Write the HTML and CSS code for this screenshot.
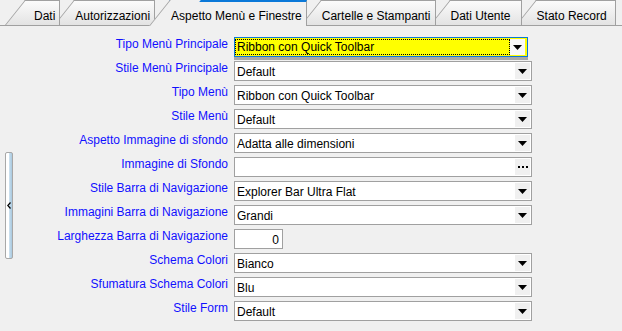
FILE: index.html
```html
<!DOCTYPE html>
<html lang="it">
<head>
  <meta charset="UTF-8" />
  <title>Opzioni</title>
  <link rel="stylesheet" href="styles.css">
</head>
<body>

<div class="tabs">
  <div class="tab">Dati</div>
  <div class="tab">Autorizzazioni</div>
  <div class="tab active">Aspetto Menù e Finestre</div>
  <div class="tab">Cartelle e Stampanti</div>
  <div class="tab">Dati Utente</div>
  <div class="tab">Stato Record</div>
</div>

<div class="content">
  <div class="splitter">
    <svg width="4" height="7" viewBox="0 0 4 7"><polyline points="3.5,0.5 0.8,3.5 3.5,6.5" fill="none" stroke="#000" stroke-width="1.2"/></svg>
  </div>

  <div class="form">
    <label>Tipo Menù Principale</label>
    <div class="field focus"><span class="value">Ribbon con Quick Toolbar</span><span class="drop"><svg width="9" height="5" viewBox="0 0 9 5"><polygon points="0,0 9,0 4.5,5" fill="#000"/></svg></span></div>

    <label>Stile Menù Principale</label>
    <div class="field"><span class="value">Default</span><span class="drop"><svg width="9" height="5" viewBox="0 0 9 5"><polygon points="0,0 9,0 4.5,5" fill="#000"/></svg></span></div>

    <label>Tipo Menù</label>
    <div class="field"><span class="value">Ribbon con Quick Toolbar</span><span class="drop"><svg width="9" height="5" viewBox="0 0 9 5"><polygon points="0,0 9,0 4.5,5" fill="#000"/></svg></span></div>

    <label>Stile Menù</label>
    <div class="field"><span class="value">Default</span><span class="drop"><svg width="9" height="5" viewBox="0 0 9 5"><polygon points="0,0 9,0 4.5,5" fill="#000"/></svg></span></div>

    <label>Aspetto Immagine di sfondo</label>
    <div class="field"><span class="value">Adatta alle dimensioni</span><span class="drop"><svg width="9" height="5" viewBox="0 0 9 5"><polygon points="0,0 9,0 4.5,5" fill="#000"/></svg></span></div>

    <label>Immagine di Sfondo</label>
    <div class="field"><span class="value"></span><span class="drop"><svg width="10" height="2" viewBox="0 0 10 2"><rect x="0" y="0" width="2" height="2"/><rect x="4" y="0" width="2" height="2"/><rect x="8" y="0" width="2" height="2"/></svg></span></div>

    <label>Stile Barra di Navigazione</label>
    <div class="field"><span class="value">Explorer Bar Ultra Flat</span><span class="drop"><svg width="9" height="5" viewBox="0 0 9 5"><polygon points="0,0 9,0 4.5,5" fill="#000"/></svg></span></div>

    <label>Immagini Barra di Navigazione</label>
    <div class="field"><span class="value">Grandi</span><span class="drop"><svg width="9" height="5" viewBox="0 0 9 5"><polygon points="0,0 9,0 4.5,5" fill="#000"/></svg></span></div>

    <label>Larghezza Barra di Navigazione</label>
    <div class="field number"><span class="value">0</span></div>

    <label>Schema Colori</label>
    <div class="field"><span class="value">Bianco</span><span class="drop"><svg width="9" height="5" viewBox="0 0 9 5"><polygon points="0,0 9,0 4.5,5" fill="#000"/></svg></span></div>

    <label>Sfumatura Schema Colori</label>
    <div class="field"><span class="value">Blu</span><span class="drop"><svg width="9" height="5" viewBox="0 0 9 5"><polygon points="0,0 9,0 4.5,5" fill="#000"/></svg></span></div>

    <label>Stile Form</label>
    <div class="field"><span class="value">Default</span><span class="drop"><svg width="9" height="5" viewBox="0 0 9 5"><polygon points="0,0 9,0 4.5,5" fill="#000"/></svg></span></div>
  </div>
</div>

</body>
</html>
```

FILE: styles.css
```css
body {
  margin: 0;
  background: #f0f0f0;
  font-family: 'Segoe UI', Tahoma, 'Liberation Sans', sans-serif;
  font-size: 12px;
  color: #000;
  height: 331px;
  overflow: hidden;
}

/* tab strip */
.tabs {
  display: flex;
  align-items: flex-start;
  height: 25px;
  border-bottom: 1px solid #a0a0a0;
  padding-left: 25px;
}

.tab {
  position: relative;
  box-sizing: border-box;
  height: 25px;
  margin-left: 14px;
  padding: 8px 4px 0 1px;
  line-height: 14px;
  white-space: nowrap;
  border-top: 1px solid #a0a0a0;
  border-right: 1px solid #a0a0a0;
  background: linear-gradient(#fbfbfb, #e3e3e3);
}

.tab::before {
  content: "";
  position: absolute;
  top: -1px;
  bottom: 0;
  left: -20px;
  width: 30px;
  border-left: 1px solid #a0a0a0;
  border-top: 1px solid #a0a0a0;
  background: linear-gradient(#fbfbfb, #e3e3e3);
  transform: skewX(-38.66deg);
  transform-origin: bottom left;
  z-index: -1;
}

.tab:first-child { margin-left: 0; padding-left: 9px; }
.tab:nth-child(1) { z-index: 6; }
.tab:nth-child(2) { z-index: 5; }
.tab:nth-child(4) { z-index: 3; }
.tab:nth-child(5) { z-index: 2; padding-right: 10px; }
.tab:nth-child(6) { z-index: 1; padding-right: 8px; }

.tab.active {
  z-index: 10;
  height: 26px;
  padding-top: 7px;
  padding-left: 2px;
  border-top: 2px solid #0a78d8;
  background: #f0f0f0;
}

.tab.active::before {
  top: -2px;
  border-top: none;
  background: #f0f0f0;
}

/* form */
.content {
  display: flex;
  align-items: flex-start;
  padding: 11px 0 0 5px;
}

.splitter {
  box-sizing: border-box;
  width: 8px;
  height: 107px;
  margin-top: 115px;
  border: 1px solid #a8a8a8;
  border-radius: 2px;
  background: linear-gradient(to right, #fff 0, #fff 45%, #c2dbec 60%, #a9c9df 100%);
  display: flex;
  align-items: center;
  padding-left: 1px;
}

.splitter svg { display: block; }

.form {
  display: grid;
  grid-template-columns: 215px 298px;
  column-gap: 6px;
  row-gap: 4px;
  grid-auto-rows: 20px;
}

.form label {
  text-align: right;
  color: #1010ff;
  line-height: 14px;
  white-space: nowrap;
}

.field {
  box-sizing: border-box;
  height: 20px;
  border: 1px solid #a0a0a0;
  background: #fff;
  display: flex;
  align-items: center;
  padding-left: 2px;
}

.field .value {
  flex: 1;
  line-height: 18px;
  padding-top: 1px;
  white-space: nowrap;
}

.drop {
  width: 15px;
  height: 16px;
  margin-right: 1px;
  background: #f0f0f0;
  display: flex;
  align-items: center;
  justify-content: center;
}

.drop svg { display: block; }

.field.focus {
  width: 294px;
  padding: 1px;
  border-color: #0a78d8;
  background: #ffff00;
  box-shadow: 0 3px 0 #a8a8a8;
}

.field.focus .value {
  line-height: 14px;
  padding: 0 0 0 1px;
  outline: 1px dotted #000;
  outline-offset: 0;
  margin-right: 1px;
}

.field.focus .drop {
  background: #f8f8f8;
}

.field.number {
  width: 49px;
  padding-right: 3px;
  text-align: right;
}
```
